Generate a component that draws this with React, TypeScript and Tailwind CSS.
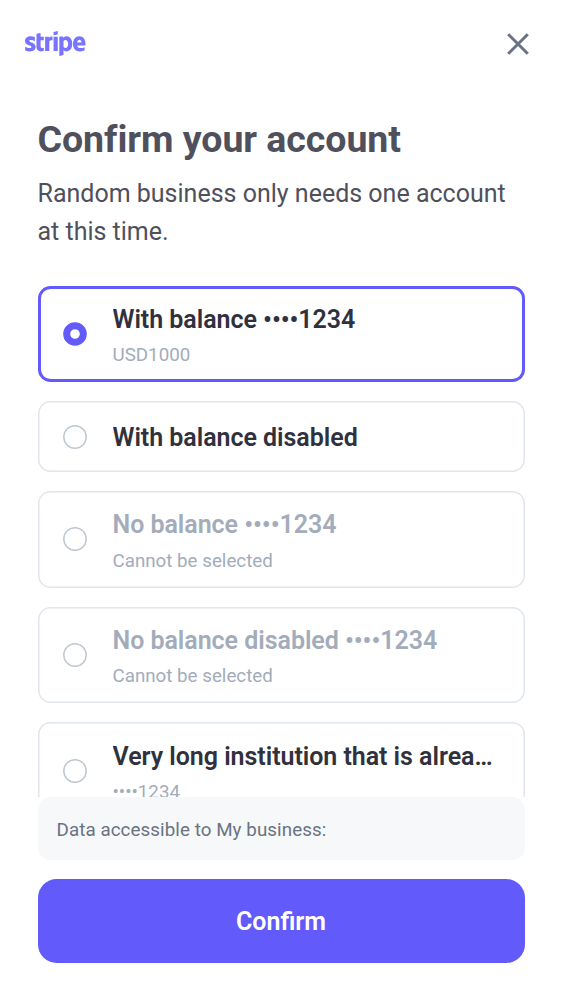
import { FaStripe } from "react-icons/fa";

type Account = {
  name: string;
  detail?: string;
  selected?: boolean;
  disabled?: boolean;
};

const accounts: Account[] = [
  { name: "With balance ••••1234", detail: "USD1000", selected: true },
  { name: "With balance disabled" },
  { name: "No balance ••••1234", detail: "Cannot be selected", disabled: true },
  { name: "No balance disabled ••••1234", detail: "Cannot be selected", disabled: true },
  { name: "Very long institution that is already linked", detail: "••••1234" },
];

function Radio({ selected }: { selected?: boolean }) {
  return (
    <svg className="h-6 w-6 shrink-0" viewBox="0 0 24 24" fill="none">
      {selected ? (
        <circle cx="12" cy="12" r="8.3" stroke="#625afa" strokeWidth="7" />
      ) : (
        <circle cx="12" cy="12" r="11.2" stroke="#c0c8d2" strokeWidth="1.5" />
      )}
    </svg>
  );
}

function AccountRow({ account }: { account: Account }) {
  const { name, detail, selected, disabled } = account;
  return (
    <li
      className={`flex shrink-0 items-center gap-[26px] rounded-[12.5px] px-[25px] ${
        detail ? "h-[96.6px]" : "h-[71px]"
      } ${
        selected
          ? "shadow-[inset_0_0_0_3px_#625afa]"
          : "shadow-[inset_0_0_0_1.5px_#e0e6eb]"
      }`}
    >
      <Radio selected={selected} />
      <div className={`min-w-0 flex-1 ${detail ? "pt-[5.5px]" : "pt-[3px]"}`}>
        <div
          className={`truncate text-[25px] leading-[37.5px] font-semibold tracking-[-0.04px] ${
            disabled ? "text-[#a3acba]" : "text-[#30313d]"
          }`}
        >
          {name}
        </div>
        {detail && (
          <div className="truncate text-[18.75px] leading-[34px] text-[#a3acba]">{detail}</div>
        )}
      </div>
    </li>
  );
}

export default function App() {
  return (
    <div className="flex h-[1000px] w-[562px] flex-col bg-white font-['Roboto',sans-serif]">
      <header className="flex h-[87px] shrink-0 items-center justify-between pr-[33px] pl-[25px]">
        <FaStripe className="h-[27px] w-[60.5px] text-[#7a73ff]" viewBox="0 113 640 286" preserveAspectRatio="none" />
        <button aria-label="Close" className="h-[22px] w-[22px]">
          <svg viewBox="0 0 22 22" className="h-full w-full" fill="none">
            <path d="M1.2 1.2 20.8 20.8M20.8 1.2 1.2 20.8" stroke="#6a7383" strokeWidth="3" />
          </svg>
        </button>
      </header>

      <main className="flex min-h-0 flex-1 flex-col px-[37.5px] pt-[27px]">
        <h1 className="text-[37.5px] leading-[50px] font-bold tracking-[-0.05px] text-[#50505c]">
          Confirm your account
        </h1>
        <p className="mt-[11px] text-[25px] leading-[37.5px] text-[#50505c]">
          Random business only needs one account at this time.
        </p>
        <ul className="mt-[35.5px] flex h-[511.5px] shrink-0 flex-col gap-[19px] overflow-hidden">
          {accounts.map((account) => (
            <AccountRow key={account.name} account={account} />
          ))}
        </ul>
        <div className="flex h-[63px] shrink-0 items-center rounded-[12.5px] bg-[#f6f8fa] px-[19px] pt-[3px] text-[18.75px] tracking-[0.08px] text-[#6a7383]">
          Data accessible to My business:
        </div>
        <button className="mt-[19px] h-[84px] shrink-0 rounded-[18.75px] bg-[#625afa] pt-[2px] text-[25px] font-semibold text-white">
          Confirm
        </button>
      </main>
    </div>
  );
}
